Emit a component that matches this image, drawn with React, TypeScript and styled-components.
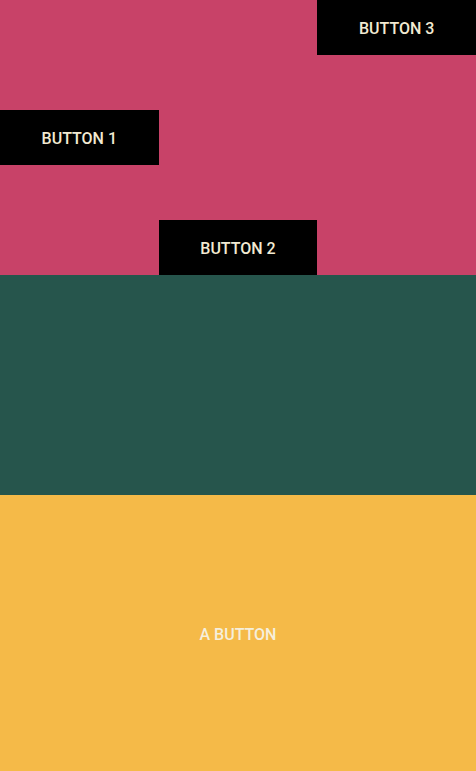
import React from 'react'
import styled, { createGlobalStyle } from 'styled-components'

const GlobalStyle = createGlobalStyle`
  html, body {
    margin: 0;
    padding: 0;
    height: 100%;
  }
  #root {
    height: 100%;
  }
`

interface CellProps {
  $row: number
  $col: number
}

const buttons = [
  { label: 'BUTTON 3', row: 1, col: 3 },
  { label: 'BUTTON 1', row: 3, col: 1 },
  { label: 'BUTTON 2', row: 5, col: 2 },
]

const App = () => {
  return (
    <>
      <GlobalStyle />
      <Page>
        <TopPanel>
          {buttons.map((b) => (
            <DarkButton key={b.label} $row={b.row} $col={b.col}>
              {b.label}
            </DarkButton>
          ))}
        </TopPanel>
        <MiddlePanel />
        <BottomPanel>
          <PlainButton>A BUTTON</PlainButton>
        </BottomPanel>
      </Page>
    </>
  )
}

export default App

const Page = styled.div`
  width: 476px;
  height: 771px;
  display: flex;
  flex-direction: column;
  font-family: Roboto, 'Liberation Sans', sans-serif;
`

const TopPanel = styled.div`
  background: #c84268;
  display: grid;
  grid-template-columns: repeat(3, 1fr);
  grid-template-rows: repeat(5, 55px);
  height: 275px;
`

const DarkButton = styled.button<CellProps>`
  grid-row: ${(p) => p.$row};
  grid-column: ${(p) => p.$col};
  background: #000;
  color: #f2ead2;
  border: none;
  margin: 0;
  padding: 1px 0 0;
  font-family: inherit;
  font-size: 16px;
  font-weight: 500;
`

const MiddlePanel = styled.div`
  background: #26554c;
  height: 220px;
`

const BottomPanel = styled.div`
  background: #f5ba48;
  flex: 1;
  display: flex;
  align-items: center;
  justify-content: center;
`

const PlainButton = styled.button`
  background: transparent;
  border: none;
  color: #f5efdc;
  font-family: inherit;
  font-size: 16px;
  font-weight: 500;
  padding: 0;
  margin-top: 2px;
`
